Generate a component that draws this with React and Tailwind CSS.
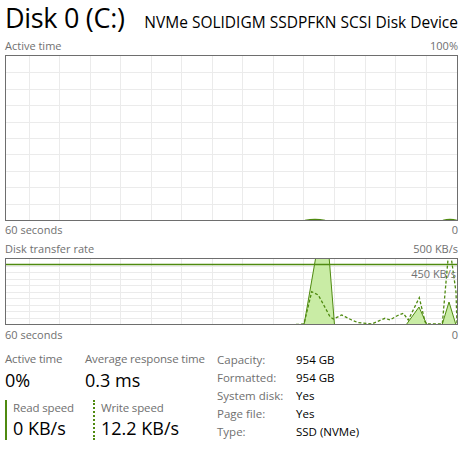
import React from "react";

const VX = Array.from({ length: 14 }, (_, k) => 22.5 + 30.55 * k);

function Grid({ w, h, rows }) {
  const lines = [];
  VX.forEach((x, i) =>
    lines.push(<line key={"v" + i} x1={Math.round(x) + 0.5} y1={0} x2={Math.round(x) + 0.5} y2={h} stroke="#ebebeb" strokeWidth="1" />)
  );
  for (let k = 1; k < 10; k++) {
    const y = Math.round((h / rows) * k) + 0.5;
    lines.push(<line key={"h" + k} x1={0} y1={y} x2={w} y2={y} stroke="#ebebeb" strokeWidth="1" />);
  }
  return <g>{lines}</g>;
}

const G = "#4f8a10";

function ActiveChart() {
  return (
    <div className="h-[166px] border border-[#6e6e6e] overflow-hidden">
      <svg width="451" height="164" className="block">
        <Grid w={451} h={164} rows={10} />
        <path d="M299 164.5 Q309 162.5 319 164.5" stroke={G} strokeWidth="1.4" fill="none" />
        <path d="M437 164.5 Q444 162.5 451 164.5" stroke={G} strokeWidth="1.4" fill="none" />
      </svg>
    </div>
  );
}

const dashPts = [
  [280, 66], [298, 65], [305.7, 32.7], [312.3, 36], [324, 57.7], [327.3, 60], [335.7, 56], [339, 57.7],
  [345.7, 61], [352.3, 63.7], [360.7, 64.3], [365.7, 65], [379, 59.3], [384, 61], [390.7, 57],
  [397.3, 54.3], [402.3, 61], [413.3, 38.7], [419, 62.7], [420.7, 65], [436.3, 65], [442.3, -3],
  [445, -3], [450, 33], [451, 66],
];

function TransferChart() {
  return (
    <div className="relative h-[67px] border border-[#6e6e6e] overflow-hidden">
      <svg width="451" height="65" className="block">
        <Grid w={451} h={65} rows={10} />
        <polygon points="298,66 310,-3 323,-3 328.5,66" fill="#c9eca5" stroke={G} strokeWidth="1" />
        <polygon points="400,66 413,48 421,66" fill="#c9eca5" stroke={G} strokeWidth="1" />
        <polygon points="436,66 443,43 450,66" fill="#c9eca5" stroke={G} strokeWidth="1" />
        <polyline points={dashPts.map((p) => p.join(",")).join(" ")} fill="none" stroke={G} strokeWidth="1.3" strokeDasharray="3 2" />
        <line x1="0" y1="5.5" x2="451" y2="5.5" stroke={G} strokeWidth="1.3" />
      </svg>
      <span className="absolute right-[1px] top-[7px] text-[11px] leading-[16px] text-[#707070]">450 KB/s</span>
    </div>
  );
}

function LabelRow({ left, right, className = "" }) {
  return (
    <div className={"flex justify-between h-[16px] text-[11px] leading-[16px] text-[#707070] " + className}>
      <span>{left}</span>
      <span>{right}</span>
    </div>
  );
}

const SL = "text-[11.5px] leading-[16px] tracking-[-0.15px] text-[#707070]";

export default function App() {
  return (
    <div className="w-[471px] h-[450px] bg-white pl-[5px] pr-[13px] font-['Open_Sans',sans-serif] text-black overflow-hidden">
      <div className="flex items-baseline justify-between h-[38px]">
        <span className="text-[27px] leading-[36px] tracking-[-0.3px]">Disk 0 (C:)</span>
        <span className="text-[15.5px] leading-[20px]">NVMe SOLIDIGM SSDPFKN SCSI Disk Device</span>
      </div>
      <LabelRow left="Active time" right="100%" className="mb-[1px]" />
      <ActiveChart />
      <LabelRow left="60 seconds" right="0" className="mt-[1px]" />
      <LabelRow left="Disk transfer rate" right="500 KB/s" className="mt-[3px] mb-[1px]" />
      <TransferChart />
      <LabelRow left="60 seconds" right="0" className="mt-[2px]" />

      <div className="flex mt-[8px]">
        <div className="flex flex-col w-[212px]">
          <div className="flex">
            <div className="w-[80px]">
              <div className={SL}>Active time</div>
              <div className="text-[18px] leading-[26px]">0%</div>
            </div>
            <div>
              <div className={SL}>Average response time</div>
              <div className="text-[18px] leading-[26px]">0.3 ms</div>
            </div>
          </div>
          <div className="flex mt-[7px]">
            <div className="w-[88px] flex">
              <div className="w-[2px] h-[40px] bg-[#4f8a10]" />
              <div className="pl-[6px]">
                <div className={SL}>Read speed</div>
                <div className="text-[18px] leading-[24px]">0 KB/s</div>
              </div>
            </div>
            <div className="flex">
              <div className="w-[2px] h-[40px] border-l-2 border-dotted border-[#4f8a10]" />
              <div className="pl-[6px]">
                <div className={SL}>Write speed</div>
                <div className="text-[18px] leading-[24px]">12.2 KB/s</div>
              </div>
            </div>
          </div>
        </div>
        <div className="flex flex-col text-[11.5px] leading-[18px]">
          {[
            ["Capacity:", "954 GB"],
            ["Formatted:", "954 GB"],
            ["System disk:", "Yes"],
            ["Page file:", "Yes"],
            ["Type:", "SSD (NVMe)"],
          ].map(([k, v]) => (
            <div key={k} className="flex">
              <span className="w-[79px] text-[#707070]">{k}</span>
              <span>{v}</span>
            </div>
          ))}
        </div>
      </div>
    </div>
  );
}
